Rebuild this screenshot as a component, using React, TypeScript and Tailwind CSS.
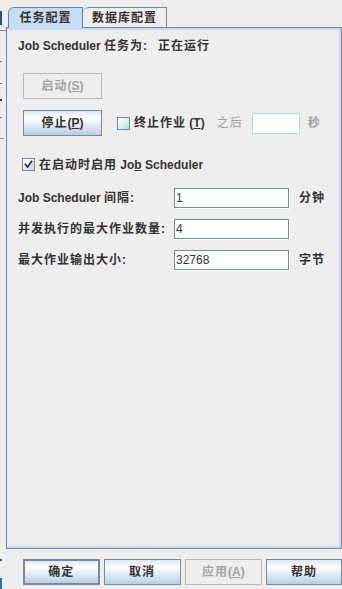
import React from "react";

const btnEnabled =
  "h-[26px] flex items-center justify-center border border-[#7a8a99] bg-[linear-gradient(to_bottom,#dde8f3_0%,#ffffff_30%,#b8cfe5_100%)] font-bold text-[#333333]";
const btnDisabled =
  "h-[26px] flex items-center justify-center border border-[#b8b8b8] bg-[#eeeeee] font-bold text-[#a3a3a3]";

function C({ children }: { children: React.ReactNode }) {
  return <span className="tracking-[1px]">{children}</span>;
}

function CheckBox({ checked }: { checked?: boolean }) {
  return (
    <div className="w-[13px] h-[13px] border border-[#7a8a99] bg-[linear-gradient(to_bottom_right,#ffffff_0%,#dde8f3_60%,#b8cfe5_100%)] flex items-center justify-center shrink-0">
      {checked && (
        <svg width="9" height="9" viewBox="0 0 9 9">
          <path d="M1.5 4.5 L3.5 7 L7.5 1.5" stroke="#333333" strokeWidth="1.8" fill="none" strokeLinecap="square" />
        </svg>
      )}
    </div>
  );
}

function Field({ value, w }: { value: string; w: string }) {
  return (
    <div className={`${w} h-[20px] border border-[#7a8a99] bg-white shadow-[1px_1px_0_#ffffff] flex items-center pl-[1px] font-normal text-[#333333]`}>
      {value}
    </div>
  );
}

export default function App() {
  return (
    <div className="relative w-[342px] h-[589px] bg-[#eeeeee] overflow-hidden text-[12px] leading-[16px] text-[#333333] font-['Liberation_Sans','Noto_Sans_CJK_SC',sans-serif] flex">
      {/* background window fragments on far left */}
      <div className="absolute left-0 top-[11px] w-[2px] h-[14px] bg-[#2a4f8f]" />
      <div className="absolute left-0 top-[30px] w-[6px] h-[1px] bg-[#8a8a8a]" />
      <div className="absolute left-0 top-[61px] w-[2px] h-[1px] bg-[#5b86d6]" />
      <div className="absolute left-0 top-[83px] w-[2px] h-[1px] bg-[#5b86d6]" />
      <div className="absolute left-0 top-[99px] w-[2px] h-[2px] bg-[#333333]" />
      <div className="absolute left-0 top-[117px] w-[2px] h-[1px] bg-[#5b86d6]" />
      <div className="absolute left-0 top-[138px] w-[4px] h-[1px] bg-[#9a9a9a]" />
      <div className="absolute left-0 top-[559px] w-[2px] h-[2px] bg-[#555555]" />
      <div className="absolute left-0 top-[578px] w-[2px] h-[11px] bg-[#2f6fcf]" />

      <div className="w-[6px] shrink-0" />
      <div className="w-[336px] flex flex-col">
        {/* tabs */}
        <div className="h-[27px] flex items-end pl-[2px] relative z-10">
          <div className="w-[75px] h-[21px] -mb-[1px] border-l border-t border-r border-[#6382bf] rounded-tl-[6px] bg-[#c8ddf2] flex items-start justify-center pt-[2px] font-bold text-[#333333]">
            <C>任务配置</C>
          </div>
          <div className="w-[84px] h-[20px] border-t border-r border-[#7a8a99] rounded-tl-[6px] bg-[#eeeeee] flex items-start justify-center pt-[2px] font-bold text-[#333333]">
            <C>数据库配置</C>
          </div>
        </div>

        {/* panel */}
        <div className="h-[522px] border-t border-r border-b border-l border-t-[#6e83a3] border-r-[#7a8a99] border-b-[#7a8a99] border-l-[#5f87d2]">
          <div className="h-full border-t-2 border-r-2 border-b-2 border-[#c8ddf2] flex flex-col">
            <div className="h-[32px] pl-[11px] flex items-center font-bold">
              <span>
                Job Scheduler <C>任务为</C>:
              </span>
              <span className="ml-[11px]">
                <C>正在运行</C>
              </span>
            </div>

            <div className="mt-[11px] pl-[16px] flex">
              <div className={`${btnDisabled} w-[79px]`}>
                <C>启动</C> (<span className="underline">S</span>)
              </div>
            </div>

            <div className="mt-[11px] pl-[16px] flex items-center">
              <div className={`${btnEnabled} w-[79px]`}>
                <C>停止</C> (<span className="underline">P</span>)
              </div>
              <div className="ml-[15px]">
                <CheckBox />
              </div>
              <span className="ml-[4px] font-bold">
                <C>终止作业</C> (<span className="underline">T</span>)
              </span>
              <span className="ml-[12px] text-[#a0a0a0]">
                <C>之后</C>
              </span>
              <div className="ml-[9px] w-[48px] h-[21px] border border-[#b8cfe5] bg-white" />
              <span className="ml-[8px] font-bold text-[#a0a0a0]">秒</span>
            </div>

            <div className="mt-[21px] pl-[15px] flex items-center h-[15px]">
              <CheckBox checked />
              <span className="ml-[4px] font-bold">
                <C>在启动时启用</C> Jo<span className="underline">b</span> Scheduler
              </span>
            </div>

            <div className="mt-[15px] pl-[11px] flex items-center h-[21px]">
              <span className="w-[156px] font-bold">
                Job Scheduler <C>间隔</C>:
              </span>
              <Field value="1" w="w-[115px]" />
              <span className="ml-[10px] font-bold">
                <C>分钟</C>
              </span>
            </div>

            <div className="mt-[10px] pl-[11px] flex items-center h-[21px]">
              <span className="w-[156px] font-bold">
                <C>并发执行的最大作业数量</C>:
              </span>
              <Field value="4" w="w-[115px]" />
            </div>

            <div className="mt-[10px] pl-[11px] flex items-center h-[21px]">
              <span className="w-[156px] font-bold">
                <C>最大作业输出大小</C>:
              </span>
              <Field value="32768" w="w-[115px]" />
              <span className="ml-[10px] font-bold">
                <C>字节</C>
              </span>
            </div>
          </div>
        </div>

        {/* bottom buttons */}
        <div className="pt-[10px] pl-[17px] flex gap-[4px]">
          <div className="w-[77px] h-[26px] flex items-center justify-center border-2 border-[#7a8a99] bg-[linear-gradient(to_bottom,#dde8f3_0%,#ffffff_30%,#b8cfe5_100%)] font-bold text-[#333333]">
            <C>确定</C>
          </div>
          <div className={`${btnEnabled} w-[77px]`}>
            <C>取消</C>
          </div>
          <div className={`${btnDisabled} w-[78px]`}>
            <C>应用</C>(<span className="underline">A</span>)
          </div>
          <div className={`${btnEnabled} w-[76px]`}>
            <C>帮助</C>
          </div>
        </div>
      </div>
    </div>
  );
}
